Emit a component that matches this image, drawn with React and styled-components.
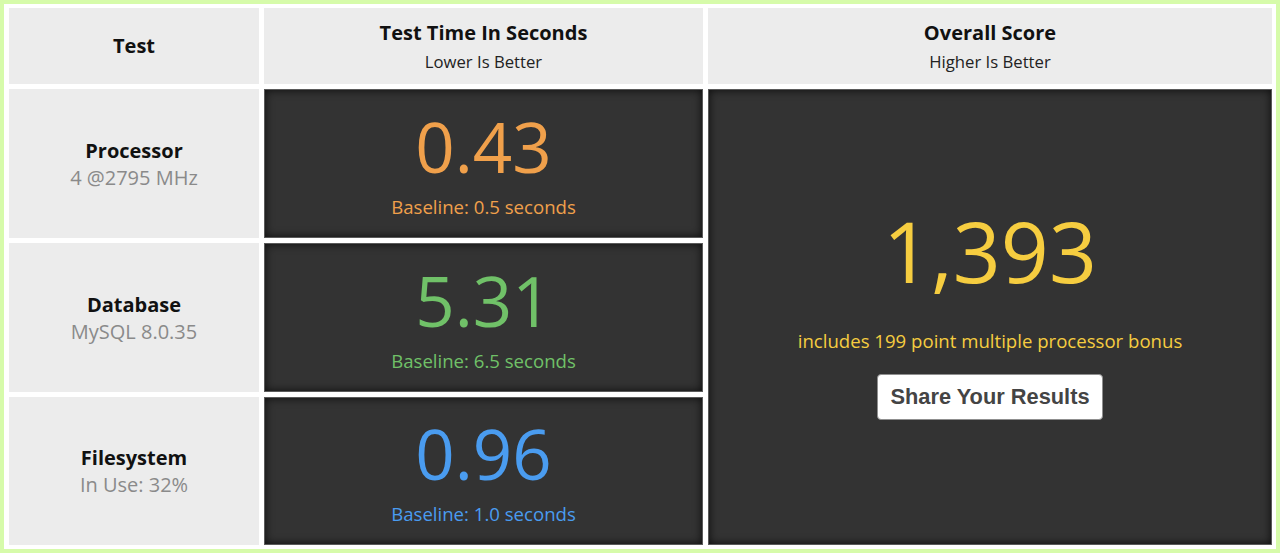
import React from "react";
import styled, { createGlobalStyle } from "styled-components";

const Global = createGlobalStyle`
  html, body { margin: 0; padding: 0; background: #fff; }
  body { font-family: "Open Sans", "Noto Sans", sans-serif; }
  * { box-sizing: border-box; }
`;

const Frame = styled.div`
  border: 4px solid #d6fbaa;
  padding: 4px 4px 4px 5px;
  background: #fff;
`;

const Grid = styled.div`
  display: grid;
  grid-template-columns: 250px 439px 1fr;
  grid-template-rows: 76px 149px 149px 148px;
  gap: 5px;
`;

const HeadCell = styled.div`
  background: #ececec;
  display: flex;
  flex-direction: column;
  align-items: center;
  justify-content: center;
  gap: 5px;
  color: #111;
`;

const HeadTitle = styled.div`
  font-size: 20px;
  line-height: 26px;
  font-weight: 700;
`;

const HeadSub = styled.div`
  font-size: 16.7px;
  line-height: 22px;
  color: #222;
`;

const LabelCell = styled.div`
  background: #ececec;
  display: flex;
  flex-direction: column;
  align-items: center;
  justify-content: center;
  gap: 2px;
`;

const LabelTitle = styled.div`
  font-size: 20px;
  line-height: 26px;
  font-weight: 700;
  color: #111;
`;

const LabelSub = styled.div`
  font-size: 20px;
  line-height: 24px;
  color: #8a8a8a;
`;

const DarkCell = styled.div`
  background: #333;
  border: 1px solid #5a5a5a;
  box-shadow: inset 0 0 10px rgba(0, 0, 0, 0.75);
  display: flex;
  flex-direction: column;
  align-items: center;
  justify-content: center;
  color: ${(p) => p.$color};
`;

const ScoreCell = styled(DarkCell)`
  grid-column: 3;
  grid-row: 2 / span 3;
  padding-bottom: 8px;
`;

const Value = styled.div`
  font-size: 69px;
  line-height: 70px;
  font-weight: 400;
  margin-bottom: 14px;
`;

const Baseline = styled.div`
  font-size: 18.6px;
  line-height: 24px;
  margin-bottom: -2px;
`;

const Score = styled.div`
  font-size: 84px;
  line-height: 88px;
  margin-bottom: 34px;
`;

const Bonus = styled.div`
  font-size: 18.6px;
  line-height: 24px;
  margin-bottom: 21px;
`;

const ShareButton = styled.button`
  width: 226px;
  height: 46px;
  background: #fff;
  border: 1px solid #8f8f8f;
  border-radius: 4px;
  font-family: "Liberation Sans", Arial, sans-serif;
  font-weight: 700;
  font-size: 21.8px;
  color: #444;
  cursor: pointer;
  padding: 0;
`;

const tests = [
  { name: "Processor", sub: "4 @2795 MHz", value: "0.43", base: "Baseline: 0.5 seconds", color: "#f0a04b" },
  { name: "Database", sub: "MySQL 8.0.35", value: "5.31", base: "Baseline: 6.5 seconds", color: "#70c168" },
  { name: "Filesystem", sub: "In Use: 32%", value: "0.96", base: "Baseline: 1.0 seconds", color: "#4a9cf0" },
];

export default function App() {
  return (
    <>
      <Global />
      <Frame>
        <Grid>
          <HeadCell>
            <HeadTitle>Test</HeadTitle>
          </HeadCell>
          <HeadCell>
            <HeadTitle>Test Time In Seconds</HeadTitle>
            <HeadSub>Lower Is Better</HeadSub>
          </HeadCell>
          <HeadCell>
            <HeadTitle>Overall Score</HeadTitle>
            <HeadSub>Higher Is Better</HeadSub>
          </HeadCell>
          {tests.map((t, i) => (
            <React.Fragment key={t.name}>
              <LabelCell style={{ gridRow: i + 2 }}>
                <LabelTitle>{t.name}</LabelTitle>
                <LabelSub>{t.sub}</LabelSub>
              </LabelCell>
              <DarkCell $color={t.color} style={{ gridRow: i + 2 }}>
                <Value>{t.value}</Value>
                <Baseline>{t.base}</Baseline>
              </DarkCell>
            </React.Fragment>
          ))}
          <ScoreCell $color="#f6cd40">
            <Score>1,393</Score>
            <Bonus>includes 199 point multiple processor bonus</Bonus>
            <ShareButton>Share Your Results</ShareButton>
          </ScoreCell>
        </Grid>
      </Frame>
    </>
  );
}
